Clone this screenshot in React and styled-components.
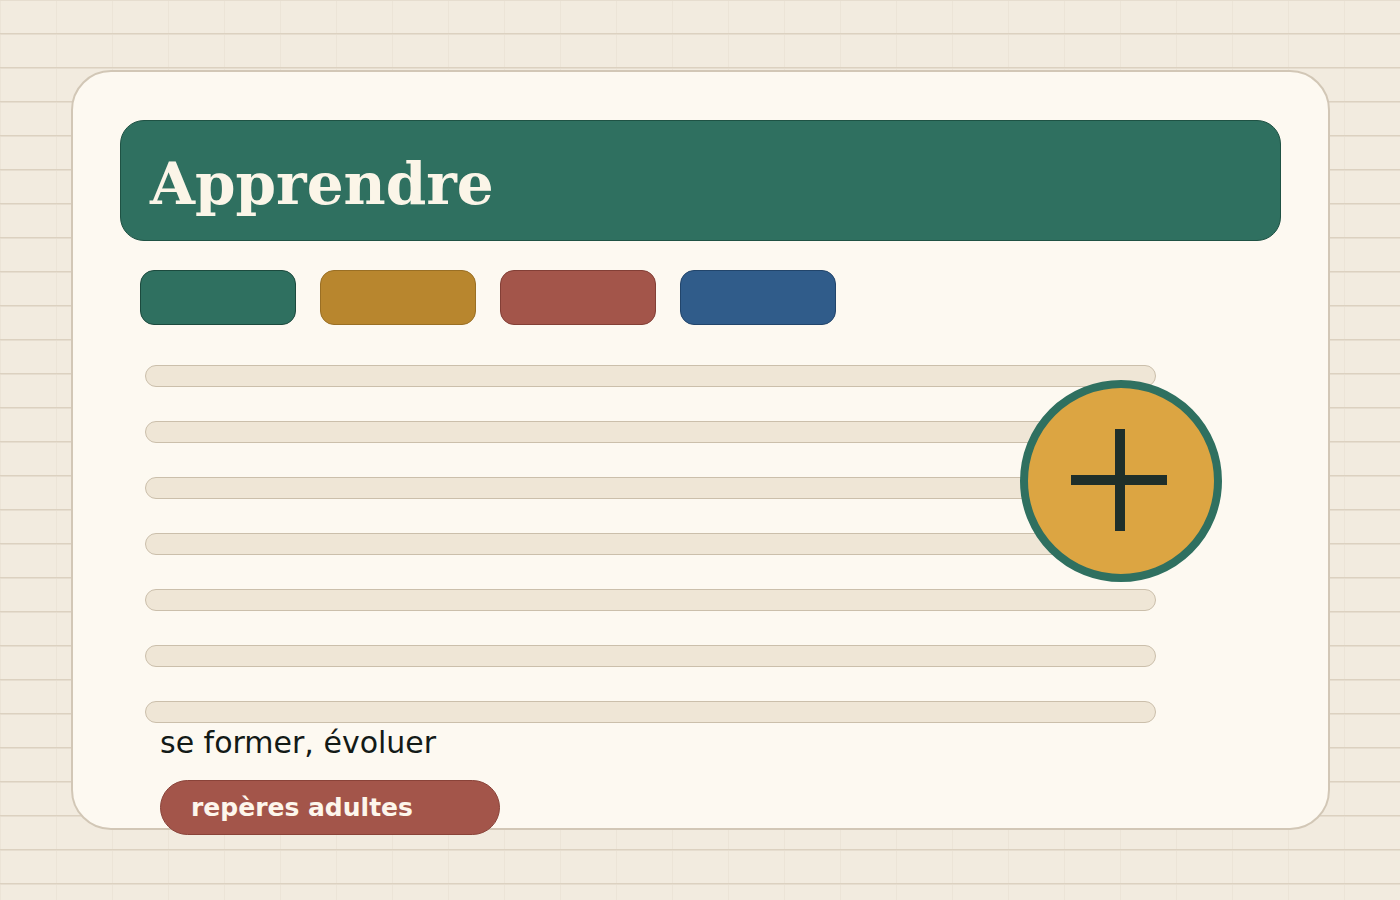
import React from 'react';
import styled, { createGlobalStyle } from 'styled-components';

const GlobalStyle = createGlobalStyle`
    html, body {
        margin: 0;
        padding: 0;
    }
    body {
        width: 1400px;
        height: 900px;
        overflow: hidden;
        background-color: #f2ebdf;
        background-image:
            linear-gradient(to bottom, #dcd1c0 0, #dcd1c0 1px, #e6ddcf 1px, #e6ddcf 2px, transparent 2px),
            linear-gradient(to right, #ece4d7 0, #ece4d7 1px, transparent 1px);
        background-size: 100% 34px, 56px 100%;
        background-position: 0 -1px, 0 0;
        font-family: "DejaVu Sans", sans-serif;
    }
`;

const Page = styled.div`
    padding: 70px 0 0 71px;
`;

const Card = styled.div`
    position: relative;
    box-sizing: border-box;
    width: 1259px;
    height: 760px;
    padding: 48px 47px 0 47px;
    background: #fdf9f1;
    border: 2px solid #d2c7b6;
    border-radius: 40px;
`;

const Header = styled.div`
    box-sizing: border-box;
    height: 121px;
    padding: 6px 0 0 29px;
    display: flex;
    align-items: center;
    background: #2f7060;
    border: 1px solid #1f5244;
    border-radius: 24px;
`;

const Title = styled.h1`
    margin: 0;
    font-family: "DejaVu Serif", serif;
    font-weight: bold;
    font-size: 58px;
    color: #fbf5e8;
`;

const Chips = styled.div`
    display: flex;
    gap: 24px;
    margin-top: 29px;
    padding-left: 20px;
`;

const Chip = styled.div`
    box-sizing: border-box;
    width: 156px;
    height: 55px;
    border-radius: 14px;
    background: ${p => p.$color};
    border: 1px solid ${p => p.$edge};
`;

const Lines = styled.div`
    display: flex;
    flex-direction: column;
    gap: 34px;
    margin-top: 40px;
    padding-left: 25px;
`;

const Line = styled.div`
    box-sizing: border-box;
    width: 1011px;
    height: 22px;
    background: #efe6d6;
    border: 1px solid #cbbfab;
    border-radius: 11px;
`;

const Caption = styled.p`
    margin: 0;
    padding-left: 40px;
    font-size: 30px;
    line-height: 40px;
    color: #131a17;
`;

const Tag = styled.div`
    box-sizing: border-box;
    display: flex;
    align-items: center;
    width: 340px;
    height: 55px;
    margin: 17px 0 0 40px;
    padding-left: 30px;
    border-radius: 28px;
    background: #a3554a;
    border: 1px solid #8a4339;
    color: #fdf6ec;
    font-weight: bold;
    font-size: 25px;
`;

const AddButton = styled.div`
    position: absolute;
    left: 947px;
    top: 308px;
    width: 202px;
    height: 202px;
    box-sizing: border-box;
    border-radius: 50%;
    border: 8px solid #2f7060;
    background: #dca542;
    display: flex;
    align-items: center;
    justify-content: center;
`;

const chips = [
    { color: '#2f7060', edge: '#1c4a3e' },
    { color: '#b8862e', edge: '#9a6f24' },
    { color: '#a3554a', edge: '#833f36' },
    { color: '#305c8a', edge: '#22456b' },
];

export default function App() {
    return (
        <>
            <GlobalStyle />
            <Page>
                <Card>
                    <Header>
                        <Title>Apprendre</Title>
                    </Header>
                    <Chips>
                        {chips.map((c, i) => (
                            <Chip key={i} $color={c.color} $edge={c.edge} />
                        ))}
                    </Chips>
                    <Lines>
                        {Array.from({ length: 7 }).map((_, i) => (
                            <Line key={i} />
                        ))}
                    </Lines>
                    <Caption>se former, évoluer</Caption>
                    <Tag>repères adultes</Tag>
                    <AddButton>
                        <svg width="100" height="104" viewBox="0 0 100 104">
                            <rect x="44" y="0" width="10" height="102" fill="#1f2f2a" />
                            <rect x="0" y="46" width="96" height="10" fill="#1f2f2a" />
                        </svg>
                    </AddButton>
                </Card>
            </Page>
        </>
    );
}
